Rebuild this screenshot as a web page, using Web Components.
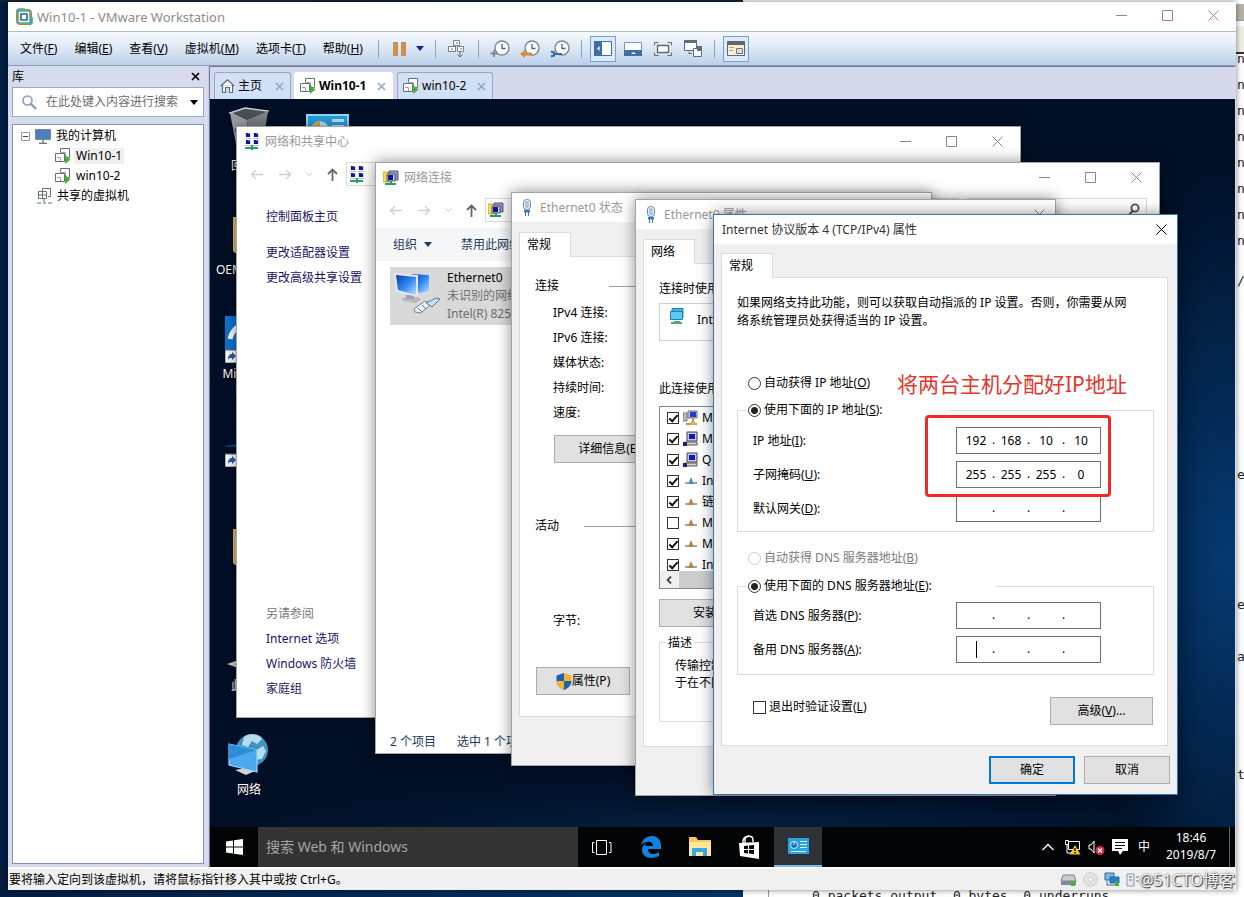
<!DOCTYPE html>
<html lang="zh-CN">
<head>
<meta charset="utf-8">
<title>Win10-1 - VMware Workstation</title>
<style>
html,body{margin:0;min-height:100vh}
body{position:relative;display:flex;overflow:hidden;box-sizing:border-box;padding:2px 8px 8px 8px;
 font:12px/16px "Noto Sans","Noto Sans CJK SC",sans-serif;color:#000;
 background:linear-gradient(#1c2430 0 1px,transparent 2px),linear-gradient(90deg,#021d42,#033463 60%)}
host-terminal{position:absolute;left:743px;right:0;top:0;bottom:0}
vm-workstation{flex:1;position:relative}
</style>
</head>
<body>
<host-terminal></host-terminal>
<vm-workstation></vm-workstation>
<script>
const BASE = `*{box-sizing:border-box}button,input{font:inherit;color:inherit;margin:0}
button{border:0;background:none;padding:0;display:inline-flex;align-items:center;justify-content:center;white-space:nowrap}
a{color:inherit;text-decoration:none}ui-icon{flex:none}`;
function define(name, css, html, setup){
  const t = document.createElement('template');
  t.innerHTML = `<style>${BASE}${css}</style>${html}`;
  customElements.define(name, class extends HTMLElement{
    constructor(){ super(); this.attachShadow({mode:'open'}).append(t.content.cloneNode(true)); }
    connectedCallback(){ if(setup) setup(this, this.shadowRoot); }
  });
}

const clock = `<circle cx="12" cy="8" r="7" fill="#fff" stroke="#7b8794" stroke-width="1.4"/><path d="M12 4v4.5h3.5" fill="none" stroke="#56616e" stroke-width="1.3"/>`;
const vmbox = `<path d="M5.5 4.5v-4h9v9h-2M.5 5.5h9v8h-9z" fill="#fff" stroke="#66707c"/><path d="M5.5 4.500h5v5M5.500 13V9.500H2" stroke="#9aa3ad" fill="none"/>`;
const pc = (x,y)=>`<path d="M${x} ${y}h6v4h-6z" fill="#d9dbe8"/><path d="M${x+1} ${y}h4v4h-4z" fill="#17178c"/><path d="M${x+3} ${y}h2v1h-2z" fill="#5a7ff0"/><path d="M${x} ${y+5}h6v1h-6z" fill="#b9bccb"/>`;
const screen = `<path d="M4 1h10v9H4z" fill="#c9ccd6" stroke="#444"/><path d="M6 3h6v5H6z" fill="#1212c8"/><path d="M2 11h12v3H2z" fill="#d3d3d3" stroke="#555"/><path d="M0 11h4v4H0z" fill="#1a1a80"/>`;
const ICONS = {
 vmware:[18,18,`<rect x="1.5" y="1.5" width="15" height="15" rx="3" fill="#f2b13b" stroke="#d57a1c"/><path d="M3 3h12v12H3z" fill="#fff7d8" stroke="#38a8b8" stroke-width="1.6"/><path d="M6 6h6v6H6z" fill="#fff" stroke="#28659a" stroke-width="1.6"/><path d="M1 3l3-2h6M17 9v6l-3 2" fill="none" stroke="#38a8b8" stroke-width="1.6"/>`],
 min:[11,11,`<path d="M0 5.5h11" stroke="currentColor"/>`],
 max:[11,11,`<path d="M.5.5h10v10H.5z" fill="none" stroke="currentColor"/>`],
 close:[11,11,`<path d="M.5.5l10 10M10.500.5l-10 10" fill="none" stroke="currentColor"/>`],
 smallx:[9,9,`<path d="M1 1l7 7M8 1L1 8" stroke="currentColor" stroke-width="1.7"/>`],
 pause:[13,14,`<path d="M0 0h5v14H0zM8 0h5v14H8z" fill="#d08f4e"/>`],
 caret:[8,5,`<path d="M0 0h8L4 5z" fill="currentColor"/>`],
 keys:[17,18,`<g fill="#fff" stroke="#77828e"><path d="M5.500.5h6v5h-6zM.5 6.500h7v5h-7zM9.500 6.500h6v5h-6z"/></g><path d="M3 9h2M12 9h2M8 3h2M12 12v5M9.500 14.500l2.500 2.500 2.500-2.500" fill="none" stroke="#5d6873"/>`],
 snap:[20,18,clock+`<path d="M4 10v7M.5 13.500h7" stroke="#7b8794" stroke-width="1.800"/>`],
 revert:[20,18,clock+`<path d="M0 14l5-4v2.500h7v3H5V18z" fill="#d98a3c"/>`],
 manage:[20,18,clock+`<path d="M1 11.500l3 1v3l-3 1M4 14h8" stroke="#356aa8" stroke-width="2.200" fill="none"/>`],
 side:[18,15,`<path d="M.5.5h17v14H.5z" fill="#fff" stroke="#3e6ea5"/><path d="M0 0h8v15H0z" fill="#3e6ea5"/><path d="M5.500 5v5L3 7.500z" fill="#fff"/>`],
 thumb:[18,14,`<path d="M.5.5h17v13H.5z" fill="#fff" stroke="#8795a5"/><path d="M0 8h18v6H0z" fill="#3e6ea5"/><path d="M7 12h5l-2.500-2z" fill="#fff"/>`],
 full:[18,14,`<path d="M3.500 3.500h11v7h-11z" fill="#fff" stroke="#626d79" stroke-width="1.400"/><path d="M.5 3.500v-3h4M13.500.5h4v3M.5 10.500v3h4M13.500 13.500h4v-3" fill="none" stroke="#626d79"/>`],
 unity:[18,17,`<path d="M.5.5h12v10H.5z" fill="#fff" stroke="#626d79"/><path d="M0 0h13v3H0z" fill="#626d79"/><path d="M8 13.500H5v-2" fill="none" stroke="#626d79"/><path d="M9.500 8.500h8v8h-8z" fill="#fff" stroke="#626d79"/><path d="M13 6h5v5h-5z" fill="#626d79"/>`],
 console:[18,15,`<path d="M.5.5h17v14H.5z" fill="#f5efe0" stroke="#666"/><path d="M0 0h18v4H0z" fill="#666"/><path d="M2 6.500h5M2 9.500h4" stroke="#c9a45d"/><path d="M9.500 7.500h6v5h-6z" fill="#ddd" stroke="#777"/>`],
 home:[15,14,`<path d="M.8 7L7.500.8 14.200 7M2.500 6v7.500h3v-5h4v5h3V6" fill="#fff" stroke="#5f6973" stroke-width="1.200"/>`],
 vmon:[16,16,vmbox+`<path d="M10 7l5.500 4.500L10 16z" fill="#44b32e"/>`],
 shared:[15,16,`<path d="M5.500 3V.5h8v8H11M1.500 3.500h8v7h-8z" fill="#fff" stroke="#66707c"/><path d="M5.500 3.500v7M1.500 7h8M7 11v3M0 15h4M6 15h3M11 15h4" stroke="#66707c"/>`],
 monitor:[16,15,`<path d="M.5.5h15v10H.5z" fill="#4c7dbd" stroke="#7a8794"/><path d="M8 11v3M4 14.500h8" stroke="#68737f" stroke-width="1.400"/>`],
 lens:[15,15,`<circle cx="5.500" cy="5.500" r="4.500" fill="none" stroke="#8a9ab8" stroke-width="1.600"/><path d="M9 9l5 5" stroke="#8a9ab8" stroke-width="2.400"/>`],
 lens2:[12,14,`<circle cx="7" cy="5" r="3.600" fill="none" stroke="#555" stroke-width="1.800"/><path d="M4.500 8L1 12" stroke="#555" stroke-width="2"/>`],
 minus:[9,9,`<path d="M.5.5h8v8h-8z" fill="#fff" stroke="#999"/><path d="M2 4.500h5" stroke="#444"/>`],
 netcenter:[16,17,pc(1,0)+pc(9,0)+pc(1,7)+pc(9,7)+`<path d="M7 12h2v2h5v2H9v1H7v-1H1v-2h6z" fill="#24a06a"/>`],
 netconn:[16,16,`<path d="M0 2h5l1 1v9H0z" fill="#f4dc5a" stroke="#c7a82f"/><path d="M6 1h9v9H6z" fill="#8d92b8" stroke="#555d8c"/><path d="M4 4h8v7H4z" fill="#cfd2e6" stroke="#555"/><path d="M5 5h5v5H5z" fill="#1212a8"/><path d="M7 11h2v2h4v2H2v-2h5z" fill="#24a06a"/>`],
 plug:[16,17,`<rect x="4.500" y=".5" width="7" height="10" rx="3" fill="#e8f0fa" stroke="#6585b5"/><path d="M7 3h2v5H7z" fill="#fff" stroke="#7895bf"/><path d="M5 11h6v2.500H5z" fill="#3f78b5"/><path d="M6.500 13v4M9.500 13v4" stroke="#3f78b5"/>`],
 back:[13,11,`<path d="M6 1L1.500 5.500 6 10M1.500 5.500H13" fill="none" stroke="#cfcfcf" stroke-width="1.300"/>`],
 fwd:[13,11,`<path d="M7 1l4.500 4.500L7 10M11.500 5.500H0" fill="none" stroke="#cfcfcf" stroke-width="1.300"/>`],
 chev:[7,5,`<path d="M.5.5l3 3 3-3" fill="none" stroke="#cfcfcf"/>`],
 up:[11,13,`<path d="M1 6l4.500-4.500L10 6M5.500 1.500V13" fill="none" stroke="#666" stroke-width="1.800"/>`],
 gt:[5,8,`<path d="M1 .5L4 4 1 7.500" fill="none" stroke="#666" stroke-width="1.300"/>`],
 lt:[6,8,`<path d="M5 .5L1.500 4 5 7.500" fill="none" stroke="#444" stroke-width="1.800"/>`],
 ethernet:[48,48,`<defs><linearGradient id="a" x2="1" y2="1"><stop stop-color="#0a3fae"/><stop offset=".5" stop-color="#2f86f2"/><stop offset="1" stop-color="#b9dcff"/></linearGradient></defs><path d="M17 4h20v20l-12 3z" fill="#d8dce2"/><path d="M18 5l17 1v16l-10 2z" fill="url(#a)"/><path d="M8 29l16-1 3 3-6 3-12-2z" fill="#b5b8bd"/><path d="M12 26h8v4h-8z" fill="#9ca3ab"/><path d="M0 4l24 2v22L2 23z" fill="#e4e7eb"/><path d="M2 6l20 2v18L4 21z" fill="url(#a)"/><path d="M20 40l11-8 6 3-10 9-6-1z" fill="#eaf1f5" stroke="#75858f"/><path d="M32 34l10-5 4 1-8 8zM24 39l4 4M28 36l4 4" fill="#bfe3f1" stroke="#607885"/>`],
 shield:[16,17,`<path d="M8 0l7.500 2.500V8c0 4-3 7-7.500 9z" fill="#f3b52c"/><path d="M8 0L.5 2.500V8c0 4 3 7 7.500 9z" fill="#1d5fb0"/><path d="M8 8h7.500c0 4-3 7-7.500 9z" fill="#1d5fb0"/><path d="M8 8H.5c0 4 3 7 7.500 9z" fill="#f3b52c"/>`],
 adapter:[16,16,`<path d="M3 .5h11v9H3z" fill="#3fb1e3" stroke="#1f7fae"/><path d="M1.500 3.500h12v8h-12z" fill="#5fc8ef" stroke="#1f7fae"/><path d="M5 13h6v1h2v2H2v-2h3z" fill="#4ca874"/>`],
 client:[16,16,`<path d="M0 3h4v8H0z" fill="#b9bdc9" stroke="#777"/><path d="M5 1h9v7H5z" fill="#c9cde0" stroke="#667"/><path d="M7 2h6v5H7z" fill="#1c3fd8"/><path d="M9 8h2v3H9zM3 13h11v2H3z" fill="#c79545"/><path d="M8 11h4v4H8z" fill="#e0b04d"/>`],
 service:[16,16,screen],
 proto:[12,8,`<path d="M0 6h12" stroke="#8a8f98" stroke-width="1.600"/><path d="M6 0l3 7H3z" fill="#b8863b"/>`],
 proto4:[12,8,`<path d="M0 6h12" stroke="#6c9bbd" stroke-width="1.600"/><path d="M6 0l2.500 7h-5z" fill="#4b86b5"/>`],
 bin:[48,48,`<path d="M5 6l15-5 23 3-4 7-18 3z" fill="#4b5056" stroke="#c9cdd2" stroke-width="1.500"/><path d="M5 6l17 7 4 34-14-5z" fill="#9a9ea3"/><path d="M22 13l21-9-6 38-11 5z" fill="#7e8388"/><path d="M9 22l8-4 2 9-7 2z" fill="#2f72c4"/>`],
 panel:[48,48,`<rect x="4" y="8" width="41" height="32" fill="#27a4e2" stroke="#8fdcff" stroke-width="2"/><circle cx="17" cy="23" r="9" fill="#bfeaff"/><path d="M17 14a9 9 0 0 0-8 9h8z" fill="#f0a53b"/><path d="M29 12h12v3H29zM29 18h12v2H29zM24 22h18v4H24z" fill="#bfeaff"/>`],
 folder:[48,48,`<path d="M8 6h30v36H10l-2-2z" fill="#d9bd6c"/><path d="M12 4h28v36H12z" fill="#f5e19b"/>`],
 edge:[48,48,`<path d="M0 1h48v46H0z" fill="#0a76d4"/><path d="M5 24C8 12 18 7 28 8c10 2 14 10 13 20H18c2 8 13 9 21 5" fill="none" stroke="#fff" stroke-width="5"/><path d="M0 35h12v13H0z" fill="#fff" stroke="#667"/><path d="M3 45c0-5 2-6 4-6v-2l4 4-4 4v-2c-2 0-3 0-4 2z" fill="#2b5fa8"/>`],
 jet:[48,48,`<path d="M0 27L40 19v9H0z" fill="#123a70"/><path d="M0 35h12v13H0z" fill="#fff" stroke="#667"/><path d="M3 45c0-5 2-6 4-6v-2l4 4-4 4v-2c-2 0-3 0-4 2z" fill="#2b5fa8"/>`],
 thispc:[48,48,`<path d="M2 37l20-7 22 7-20 8z" fill="#c8ccd2"/><path d="M14 10h30v22H14z" fill="#2f9be6"/>`],
 network:[48,48,`<circle cx="27" cy="19" r="16" fill="#3f94bd"/><path d="M19 6c4-4 14-4 18 2l-5 5-5-3-4 6-6-2zM30 20l8-5 3 5-4 8-7 1z" fill="#b9dceb"/><path d="M10 39l11-2 9 3-9 4z" fill="#d5d0d5"/><path d="M4 13l28 6v22L4 34z" fill="#4ba9ee" stroke="#9bd3fa" stroke-width="1.200"/><path d="M4 13l28 6-28 9z" fill="#2b8ddb"/>`],
 start:[17,16,`<path d="M0 2.500l7-1v6H0zM8 1.300L17 0v7.500H8zM0 8.500h7v6l-7-1zM8 8.500h9V16l-9-1.300z" fill="#fff"/>`],
 task:[20,15,`<path d="M4.500.5h10v14h-10zM2.500 2.500h-2v10h2M17 2.500h2v10h-2" fill="none" stroke="#fff"/>`],
 e:[22,22,`<path d="M1 9C3 2 8 0 12 0c6 0 9 5 9 9v4H8c0 6 7 6 11 3v4c-7 4-17 2-17-6 0-3 2-6 5-7-2 2-2 3-2 3h8c0-4-3-5-6-4-3 0-5 2-6 3z" fill="#1383e0"/>`],
 explorer:[22,20,`<path d="M0 0h7l2 3h13v16H0z" fill="#f3c854"/><path d="M0 5h22v14H0z" fill="#ffe69a"/><path d="M3 11h15v8h-4v-4H7v4H3z" fill="#35a9e0"/>`],
 store:[20,24,`<path d="M6 8V5c0-5 8-5 8 0v2M4 8V6c0-3 3-5 6-5" fill="none" stroke="#fff" stroke-width="1.400"/><path d="M0 8l20-1v17L1 21z" fill="#fff"/><path d="M5 11l4-.5V14H5zM10 10.400l5-.4v4h-5zM5 15h4v3.500L5 18zM10 15h5v4l-5-.5z" fill="#000"/>`],
 cpl:[21,16,`<path d="M0 0h21v16H0z" fill="#2ba5e0"/><circle cx="6" cy="7" r="3.500" fill="#1d6fb0" stroke="#d8f2ff"/><path d="M6 7V4M12 3.500h7M12 6.500h7M12 9.500h7M3 13.500h15" stroke="#d8f2ff"/>`],
 tup:[12,8,`<path d="M.5 7L6 1.500 11.500 7" fill="none" stroke="#fff" stroke-width="1.300"/>`],
 tnet:[17,16,`<path d="M4.500 2.500h11v8h-11zM1.500 1.500h3v4h-3zM3 6v8h7" fill="#000" stroke="#fff"/><path d="M11 6l5.500 9.500h-11z" fill="#f5c32c"/><path d="M11 9v3M11 13v1.500" stroke="#000" stroke-width="1.300"/>`],
 tvol:[17,17,`<path d="M1 6h2l3-4v12l-3-4H1z" fill="none" stroke="#fff"/><circle cx="12" cy="11.500" r="4.500" fill="#d9293c"/><path d="M10 9.500l4 4M14 9.500l-4 4" stroke="#fff" stroke-width="1.200"/>`],
 tmsg:[16,16,`<path d="M0 0h16v12h-5l-3 4-2-4H0z" fill="#fff"/><path d="M3 3.500h10M3 6.500h10M3 9.500h7" stroke="#000"/>`],
 disk:[17,14,`<path d="M3 2h11l2 6H1z" fill="#c5ccd3" stroke="#7c8790"/><path d="M1 8h15v4H1z" fill="#7f8a94"/><path d="M11 9h4v4h-4z" fill="#43b72c"/>`],
 cd:[15,15,`<circle cx="7.500" cy="7.500" r="7" fill="#e3e3e3" stroke="#cfcfcf"/><circle cx="7.500" cy="7.500" r="2" fill="#fff" stroke="#ccc"/>`],
 nic:[16,15,`<path d="M1 1h9v7H1z" fill="#7fb6e4" stroke="#2c6aa3"/><path d="M6 5h9v6H6z" fill="#2f7fc4" stroke="#2c6aa3"/><path d="M3 9v4h6M10 12v2" fill="none" stroke="#2c6aa3"/><path d="M11 10h4v4h-4z" fill="#43b72c"/>`],
 usb:[14,14,`<path d="M1 1h7v12H1z" fill="#e6ebf0" stroke="#8d9aa6"/><path d="M3 4h3M3 7h3M10 4h3M10 8h3" stroke="#6e7b87"/>`]
};
customElements.define('ui-icon', class extends HTMLElement{
  constructor(){ super(); this.attachShadow({mode:'open'}); }
  connectedCallback(){
    const [w,h,m] = ICONS[this.getAttribute('name')];
    this.shadowRoot.innerHTML = `<style>:host{display:inline-flex}svg{display:block}</style><svg width="${w}" height="${h}" viewBox="0 0 ${w} ${h}" aria-hidden="true">${m}</svg>`;
  }
});

define('host-terminal', `:host{display:flex;flex-direction:column;background:linear-gradient(#8c8c8c 0 2px,#fff 2px);font:13px/26px "DejaVu Sans Mono","Liberation Mono",monospace;color:#222}
.bar{height:46px;flex:none;background:linear-gradient(#fff 0 4px,#b9b3a8 4px 20px,#8aa 20px 21px,#fff 21px 26px,#efefe6 26px)}
.right{display:flex;flex-direction:column;align-items:flex-end;background:linear-gradient(#efefe6 0 6px,#333 6px 8px,transparent 8px)}
.right i{font-style:normal;width:7px;height:26px}
.g1{margin-top:14px}.g2{margin-top:168px}.g3{margin-top:104px}.g4{margin-top:26px}.g5{margin-top:92px}
.last{height:12px;margin:auto 0 -4px 25px;padding-left:43px;line-height:12px;border-left:1px solid #999;white-space:pre}`,
`<div class="bar"></div><div class="right"><i>n</i><i>n</i><i>n</i><i>n</i><i>n</i><i>n</i><i>n</i><i>n</i><i class="g1">/</i><i class="g2">e</i><i class="g3">e</i><i class="g4">a</i><i class="g5">t</i></div><div class="last">0 packets output, 0 bytes, 0 underruns</div>`);

define('vm-menubar', `:host{display:flex;align-items:center;height:35px;padding:0 4px;background:linear-gradient(#f6fafe,#dfeaf6 45%,#bcd0e9);border-top:1px solid #a9bdd8;border-bottom:1px solid #8d9ab5}
.m{padding:0 8px;height:24px;margin-right:1px}hr{width:1px;height:18px;border:0;margin:0 6px;background:#8ba3c4}.t{min-width:26px;height:26px;margin:0 2px}
.on{border:1px solid #7aa0d6;background:#dcebfb}.pw{min-width:26px;margin-right:0}.car{color:#202080;min-width:14px;margin-left:0}`,
`<button class="m">文件(<u>F</u>)</button><button class="m">编辑(<u>E</u>)</button><button class="m">查看(<u>V</u>)</button><button class="m">虚拟机(<u>M</u>)</button><button class="m">选项卡(<u>T</u>)</button><button class="m">帮助(<u>H</u>)</button>
<hr><button class="t pw" aria-label="挂起"><ui-icon name="pause"></ui-icon></button><button class="t car" aria-label="电源"><ui-icon name="caret"></ui-icon></button>
<hr><button class="t" aria-label="发送 Ctrl+Alt+Del"><ui-icon name="keys"></ui-icon></button>
<hr><button class="t" aria-label="快照"><ui-icon name="snap"></ui-icon></button><button class="t" aria-label="恢复"><ui-icon name="revert"></ui-icon></button><button class="t" aria-label="管理"><ui-icon name="manage"></ui-icon></button>
<hr><button class="t on" aria-label="库"><ui-icon name="side"></ui-icon></button><button class="t" aria-label="缩略图"><ui-icon name="thumb"></ui-icon></button><button class="t" aria-label="全屏"><ui-icon name="full"></ui-icon></button><button class="t" aria-label="Unity"><ui-icon name="unity"></ui-icon></button>
<hr><button class="t on" aria-label="控制台"><ui-icon name="console"></ui-icon></button>`);

define('vm-library', `:host{display:flex;flex-direction:column;width:201px;padding:0 4px 3px 4px;background:#d6dbee;border-right:1px solid #c4cbe2}
header{display:flex;justify-content:space-between;align-items:center;height:21px;padding-right:4px}
.s{display:flex;align-items:center;height:30px;background:#fff;border:1px solid #9aa7c4;padding:0 5px 0 9px;margin-bottom:7px}
.s input{flex:1;min-width:0;border:0;outline:0;background:none;padding:0 0 0 9px}.s input::placeholder{color:#6d6d6d;opacity:1}
ul{list-style:none;margin:0;padding:0}.tree{flex:1;background:#fff;border:1px solid #7f93b8;padding:1px 8px}
.r{display:flex;align-items:center;gap:5px;height:20px}.k{padding-left:34px}.k span{padding:0 2px;margin-left:-2px}.on{background:#efefef}.sh{padding-left:16px}`,
`<header><span>库</span><button aria-label="关闭"><ui-icon name="smallx"></ui-icon></button></header>
<div class="s"><ui-icon name="lens"></ui-icon><input aria-label="搜索" placeholder="在此处键入内容进行搜索"><ui-icon name="caret"></ui-icon></div>
<ul class="tree"><li><div class="r"><ui-icon name="minus"></ui-icon><ui-icon name="monitor"></ui-icon><span>我的计算机</span></div>
<ul><li class="r k"><ui-icon name="vmon"></ui-icon><span class="on">Win10-1</span></li><li class="r k"><ui-icon name="vmon"></ui-icon><span>win10-2</span></li></ul></li>
<li class="r sh"><ui-icon name="shared"></ui-icon><span>共享的虚拟机</span></li></ul>`);

define('vm-tab', `:host{display:flex;align-items:center;height:27px;padding:0 6px 0 5px;border:1px solid #93a8cc;border-bottom:0;border-radius:3px 3px 0 0;background:linear-gradient(#d3e0f4,#cfe0f7)}
:host([active]){background:#fff;border-color:#fff;font-weight:bold}span{flex:1;padding-left:3px}button{color:#93a9c4}`,
`<slot name="icon"></slot><span><slot></slot></span><button aria-label="关闭"><ui-icon name="smallx"></ui-icon></button>`);

define('guest-window', `:host{display:flex;flex-direction:column;position:absolute;background:#fff;border:1px solid #a3a3a3;box-shadow:0 0 14px rgba(0,0,0,.45);overflow:hidden;color:#000}
:host([dialog]){background:#f0f0f0}:host([active]){border-color:#2f78b8}
header{display:flex;align-items:center;height:29px;padding-left:7px;gap:5px;background:#fff;color:#999;white-space:nowrap}
:host([active]) header{color:#333;padding-left:3px}h2{flex:1;font:inherit;margin:0}.c{display:flex}button{width:46px;height:29px;color:#888}:host([dialog]) button{width:31px}:host([active]) button{color:#000}`,
`<header><slot name="icon"></slot><h2><slot name="title"></slot></h2><span class="c"></span></header><slot></slot>`,
(h,r)=>{ r.querySelector('.c').innerHTML=(h.hasAttribute('dialog')?[['close','关闭']]:[['min','最小化'],['max','最大化'],['close','关闭']]).map(([n,l])=>`<button aria-label="${l}"><ui-icon name="${n}"></ui-icon></button>`).join(''); });

define('address-row', `:host{display:flex;align-items:center;height:36px;padding:0 12px 0 5px;flex:none}
.n{width:28px}.f{width:30px}.c{width:18px}.a{flex:1;display:flex;align-items:center;gap:9px;height:24px;border:1px solid #d9d9d9;padding:0 2px}
.s{display:flex;align-items:center;justify-content:flex-end;width:180px;height:24px;margin-left:8px;padding-right:6px;border:1px solid #d9d9d9}`,
`<button class="n" aria-label="后退"><ui-icon name="back"></ui-icon></button><button class="f" aria-label="前进"><ui-icon name="fwd"></ui-icon></button><button class="c" aria-label="最近"><ui-icon name="chev"></ui-icon></button><button class="n" aria-label="上移"><ui-icon name="up"></ui-icon></button><div class="a"><slot></slot><ui-icon name="gt"></ui-icon></div><div class="s"><ui-icon name="lens2"></ui-icon></div>`);

define('tab-page', `:host{display:flex;flex-direction:column;flex:1;padding:9px 9px 0 6px}
.tab{align-self:flex-start;width:52px;height:25px;padding:0 7px;justify-content:flex-start;background:#fff;border:1px solid #dcdcdc;border-bottom:0;margin-bottom:-1px;position:relative}
.p{flex:1;background:#fff;border:1px solid #dcdcdc}`,
`<button class="tab" role="tab"><slot name="tab"></slot></button><div class="p" role="tabpanel"><slot></slot></div>`);

define('sharing-center', `:host{display:flex;flex-direction:column;flex:1;padding:12px 29px 16px;color:#1b1464}a,span{height:25px;line-height:25px}
nav{display:flex;flex-direction:column;align-items:flex-start}.home{margin-bottom:11px}.see{margin-top:auto}.see span{color:#777}`,
`<nav><a href="#" class="home">控制面板主页</a><a href="#">更改适配器设置</a><a href="#">更改高级共享设置</a></nav>
<nav class="see"><span>另请参阅</span><a href="#">Internet 选项</a><a href="#">Windows 防火墙</a><a href="#">家庭组</a></nav>`);

define('connection-list', `:host{display:flex;flex-direction:column;flex:1;white-space:nowrap;overflow:hidden}
.bar{display:flex;height:33px;flex:none;background:#f5f6f7;padding:0 17px;gap:29px;color:#1e395b}.bar button{gap:7px}
.item{display:flex;gap:5px;width:280px;height:58px;margin:6px 14px;padding:2px 4px;background:#d9d9d9;line-height:18px;color:#6d6d6d}.item b{font-weight:400;color:#000}.item div{display:flex;flex-direction:column}
footer{display:flex;gap:21px;margin-top:auto;padding:0 14px;height:22px;line-height:22px;color:#1e395b}`,
`<div class="bar"><button>组织<ui-icon name="caret"></ui-icon></button><button>禁用此网络</button></div>
<div class="item"><ui-icon name="ethernet"></ui-icon><div><b>Ethernet0</b><span>未识别的网络</span><span>Intel(R) 825</span></div></div>
<footer><span>2 个项目</span><span>选中 1 个项</span></footer>`);

const BTN = `.btn{height:28px;border:1px solid #adadad;background:#e1e1e1}`;
define('status-form', `:host{display:flex;flex-direction:column;align-items:flex-start;height:100%;padding:19px 15px 0}
h3{display:flex;align-items:center;width:100%;font:inherit;margin:0;height:20px}h3:after{content:"";flex:1;height:1px;background:#a0a0a0;margin-left:50px}
h3.a:after{margin-left:25px}dl{margin:4px 0 10px 18px;line-height:25px}dt{height:25px}.d{width:120px;margin-left:19px}h3.a{margin-top:53px}
.x{margin:77px 0 0 18px}.p{width:94px;margin:38px 0 0 1px}${BTN}`,
`<h3>连接</h3><dl><dt>IPv4 连接:</dt><dt>IPv6 连接:</dt><dt>媒体状态:</dt><dt>持续时间:</dt><dt>速度:</dt></dl><button class="btn d">详细信息(E)...</button>
<h3 class="a">活动</h3><div class="x">字节:</div><button class="btn p"><ui-icon name="shield"></ui-icon>属性(P)</button>`);

const CHECK = `input[type=checkbox]{appearance:none;flex:none;width:13px;height:13px;border:1px solid #333;background:#fff;display:grid;place-items:center}
input[type=checkbox]:checked:after{content:"";width:3px;height:7px;border:solid #111;border-width:0 2px 2px 0;transform:rotate(42deg);margin-top:-2px}`;
define('adapter-form', `:host{display:flex;flex-direction:column;padding:17px 15px 0;height:100%;white-space:nowrap}
.dev{display:flex;gap:12px;height:38px;margin:6px 0 40px;padding:4px 9px 0;align-items:flex-start;border:1px solid #cfcfcf}.dev span{margin-top:4px}
.list{height:183px;margin:9px 0 10px;border:1px solid #828790;overflow:hidden;display:flex;flex-direction:column}ul{list-style:none;margin:0;padding:1px 0 0 7px;height:164px;overflow:hidden}
label{display:flex;align-items:center;height:20px;margin-bottom:1px;gap:1px}label input[type=checkbox]{width:12px;height:12px}label i{width:21px;display:grid;place-items:center}
.sb{display:flex;height:17px;background:#f0f0f0;align-items:center;padding-left:6px;gap:7px}.sb b{width:300px;height:17px;background:#cdcdcd}
.btn{width:118px;flex:none}fieldset{margin:7px 0 0;border:1px solid #dcdcdc;padding:6px 15px;height:88px;line-height:17px}legend{padding:0 2px;margin-left:-9px}${BTN}${CHECK}`,
`<div>连接时使用</div><div class="dev"><ui-icon name="adapter"></ui-icon><span>Int</span></div><div>此连接使用</div>
<div class="list"><ul>
<li><label><input type="checkbox" checked><i><ui-icon name="client"></ui-icon></i>M</label></li>
<li><label><input type="checkbox" checked><i><ui-icon name="service"></ui-icon></i>M</label></li>
<li><label><input type="checkbox" checked><i><ui-icon name="service"></ui-icon></i>Q</label></li>
<li><label><input type="checkbox" checked><i><ui-icon name="proto4"></ui-icon></i>In</label></li>
<li><label><input type="checkbox" checked><i><ui-icon name="proto"></ui-icon></i>链</label></li>
<li><label><input type="checkbox"><i><ui-icon name="proto"></ui-icon></i>M</label></li>
<li><label><input type="checkbox" checked><i><ui-icon name="proto"></ui-icon></i>M</label></li>
<li><label><input type="checkbox" checked><i><ui-icon name="proto"></ui-icon></i>In</label></li></ul>
<div class="sb"><ui-icon name="lt"></ui-icon><b></b></div></div>
<button class="btn">安装(N)...</button><fieldset><legend>描述</legend>传输控制<br>于在不同</fieldset>`);

define('ip-field', `:host{display:grid;grid-template-columns:203px 145px;align-items:center;height:26px}
.f{display:flex;height:27px;padding-left:4px;border:1px solid #6f6f6f;background:#fff;line-height:23px}
input{width:30px;padding:0;border:0;outline:0;background:none;text-align:center}i{font-style:normal;width:5px;text-align:center}
:host([caret]) input:first-child{background:linear-gradient(#000,#000) 15px 4px/1px 17px no-repeat}`,
`<label for="o0"><slot></slot></label><div class="f"></div>`,
(h,r)=>{ const v=(h.getAttribute('value')||'...').split('.'); r.querySelector('.f').innerHTML=v.map((s,i)=>`<input id="o${i}" value="${s}" aria-label="${i+1}" maxlength="3">`).join('<i>.</i>'); });

define('ipv4-form', `:host{display:block;padding:16px 13px 16px 15px}
p{margin:0 0 43px;width:396px;line-height:18px}.r{display:flex;align-items:center;gap:3px;height:20px}.o{margin-left:11px}
input[type=radio]{appearance:none;width:13px;height:13px;border:1px solid #333;border-radius:50%;background:#fff}
input[type=radio]:checked{background:radial-gradient(circle,#222 0 3px,#fff 4px)}input[type=radio]:disabled{border-color:#ccc}
fieldset{min-width:0;margin:7px 0 16px;border:1px solid #dcdcdc;padding:7px 0 10px 15px}legend{padding:0 0 0 2px;margin-left:-7px;width:204px}
.dns{margin:8px 0 22px;padding:6px 0 12px 15px}.dns legend{width:250px}ip-field+ip-field{margin-top:8px}.off{color:#7b7b7b}
.end{display:flex;justify-content:space-between;align-items:flex-start;padding:0 1px 0 16px}.end .btn{width:103px}${BTN}${CHECK}`,
`<p>如果网络支持此功能，则可以获取自动指派的 IP 设置。否则，你需要从网络系统管理员处获得适当的 IP 设置。</p>
<label class="r o"><input type="radio" name="ip"><span>自动获得 IP 地址(<u>O</u>)</span></label>
<fieldset><legend><label class="r"><input type="radio" name="ip" checked><span>使用下面的 IP 地址(<u>S</u>):</span></label></legend>
<ip-field value="192.168.10.10">IP 地址(<u>I</u>):</ip-field><ip-field value="255.255.255.0">子网掩码(<u>U</u>):</ip-field><ip-field>默认网关(<u>D</u>):</ip-field></fieldset>
<label class="r o off"><input type="radio" name="dns" disabled><span>自动获得 DNS 服务器地址(<u>B</u>)</span></label>
<fieldset class="dns"><legend><label class="r"><input type="radio" name="dns" checked><span>使用下面的 DNS 服务器地址(<u>E</u>):</span></label></legend>
<ip-field>首选 DNS 服务器(<u>P</u>):</ip-field><ip-field caret>备用 DNS 服务器(<u>A</u>):</ip-field></fieldset>
<div class="end"><label class="r"><input type="checkbox"><span>退出时验证设置(<u>L</u>)</span></label><button class="btn"><span>高级(<u>V</u>)...</span></button></div>`);

define('desktop-shortcut', `:host{display:flex;flex-direction:column;align-items:center;height:104px;padding-top:8px;gap:2px;color:#fff;text-align:center;line-height:17px;text-shadow:0 1px 2px #000}`,
`<slot name="i"></slot><span><slot></slot></span>`);

define('guest-taskbar', `:host{display:flex;height:40px;background:#030406;color:#fff}.st{width:48px}
input{width:320px;border:0;outline:0;background:#333;padding:0 8px;font-size:14px;line-height:20px}input::placeholder{color:#a5a5a5;opacity:1}
.t{width:48px;margin-right:1px}.on{background:#2e3136;border-bottom:2px solid #76b9ed}
.tray{margin-left:auto;display:flex;align-items:center}.tray button{width:24px;height:40px}.clock{width:70px;text-align:center;line-height:17px;padding-bottom:2px}.end{width:6px;height:40px;margin-left:3px;border-left:1px solid #666}`,
`<button class="st" aria-label="开始"><ui-icon name="start"></ui-icon></button><input aria-label="搜索" placeholder="搜索 Web 和 Windows"><button class="t" aria-label="任务视图"><ui-icon name="task"></ui-icon></button><button class="t" aria-label="Edge"><ui-icon name="e"></ui-icon></button><button class="t" aria-label="文件资源管理器"><ui-icon name="explorer"></ui-icon></button><button class="t" aria-label="应用商店"><ui-icon name="store"></ui-icon></button><button class="t on" aria-label="控制面板"><ui-icon name="cpl"></ui-icon></button>
<div class="tray"><button aria-label="更多"><ui-icon name="tup"></ui-icon></button><button aria-label="网络"><ui-icon name="tnet"></ui-icon></button><button aria-label="音量"><ui-icon name="tvol"></ui-icon></button><button aria-label="通知"><ui-icon name="tmsg"></ui-icon></button><button>中</button><div class="clock">18:46<br>2019/8/7</div><span class="end"></span></div>`);

define('guest-desktop', `:host{display:flex;flex-direction:column;position:relative;flex:1;overflow:hidden;
background:radial-gradient(ellipse 130px 400px at 99% 60%,#043a72,rgba(4,50,100,0)),radial-gradient(ellipse 500px 60px at 50% 96%,#04203f,rgba(4,32,63,0)),#010f26}
.icons{flex:1;display:grid;grid-template-columns:78px 78px;grid-auto-rows:104px;align-content:start}
.icons>*{grid-column:1}.icons>.c2{grid-column:2;grid-row:1}
.w1{left:26px;top:27px;width:785px;height:592px}.w2{left:165px;top:63px;width:785px;height:592px}.w3{left:301px;top:93px;width:421px;height:574px}
.w4{left:425px;top:100px;width:421px;height:597px}.w5{left:503px;top:115px;width:465px;height:581px}.w3 tab-page,.w4 tab-page{margin-bottom:48px;padding:10px 9px 0 7px}
.w5 tab-page{padding-left:7px}
.act{display:flex;justify-content:flex-end;gap:9px;padding:10px 7px}.act button{width:86px}${BTN}.btn.ok{border:2px solid #0078d7}
.note{position:absolute;left:183px;top:154px;font-size:21px;line-height:30px;color:#e5352b;white-space:nowrap}.mark{position:absolute;left:211px;top:200px;width:186px;height:82px;border:3px solid #ee2a22;border-radius:4px}`,
`<div class="icons"><desktop-shortcut><ui-icon slot="i" name="bin"></ui-icon>回收站</desktop-shortcut><desktop-shortcut class="c2"><ui-icon slot="i" name="panel"></ui-icon></desktop-shortcut>
<desktop-shortcut><ui-icon slot="i" name="folder"></ui-icon>OEM 配置文</desktop-shortcut><desktop-shortcut><ui-icon slot="i" name="edge"></ui-icon>Microsoft<br>Edge</desktop-shortcut><desktop-shortcut><ui-icon slot="i" name="jet"></ui-icon></desktop-shortcut><desktop-shortcut><ui-icon slot="i" name="folder"></ui-icon></desktop-shortcut><desktop-shortcut><ui-icon slot="i" name="thispc"></ui-icon>此电脑</desktop-shortcut><desktop-shortcut><ui-icon slot="i" name="network"></ui-icon>网络</desktop-shortcut></div>
<guest-taskbar></guest-taskbar>
<guest-window class="w1"><ui-icon slot="icon" name="netcenter"></ui-icon><span slot="title">网络和共享中心</span><address-row><ui-icon name="netcenter"></ui-icon></address-row><sharing-center></sharing-center></guest-window>
<guest-window class="w2"><ui-icon slot="icon" name="netconn"></ui-icon><span slot="title">网络连接</span><address-row><ui-icon name="netconn"></ui-icon></address-row><connection-list></connection-list></guest-window>
<guest-window class="w3" dialog><ui-icon slot="icon" name="plug"></ui-icon><span slot="title">Ethernet0 状态</span><tab-page><span slot="tab">常规</span><status-form></status-form></tab-page></guest-window>
<guest-window class="w4" dialog><ui-icon slot="icon" name="plug"></ui-icon><span slot="title">Ethernet0 属性</span><tab-page><span slot="tab">网络</span><adapter-form></adapter-form></tab-page></guest-window>
<guest-window class="w5" dialog active><span slot="icon"></span><span slot="title">Internet 协议版本 4 (TCP/IPv4) 属性</span><tab-page><span slot="tab">常规</span><ipv4-form></ipv4-form></tab-page><div class="act"><button class="btn ok">确定</button><button class="btn">取消</button></div><span class="note">将两台主机分配好IP地址</span><div class="mark"></div></guest-window>`);

define('vm-workstation', `:host{display:flex;flex-direction:column;background:#d6dbee;box-shadow:0 0 6px rgba(0,0,0,.5)}
header{display:flex;align-items:center;height:29px;background:#fff;color:#8c8c8c;padding-left:7px}h1{flex:1;font:inherit;font-size:13px;margin:0 0 0 4px}header button{width:46px;height:27px;align-self:flex-start}
main{flex:1;display:flex}.con{flex:1;display:flex;flex-direction:column;min-width:0;border:solid #6f7a94;border-width:1px 0 0 1px;margin-right:1px}
.tabs{display:flex;height:32px;padding:5px 4px 0;background:#d4d9ec}.t1{width:77px}.t2{width:99px;margin:0 4px 0 3px}.t3{width:96px}
footer{display:flex;align-items:center;height:23px;background:#f0f0f0;border-top:2px solid #fff;padding:0 1px}footer span{flex:1}footer ui-icon{margin-right:6px}
.wm{position:absolute;right:1px;bottom:0;font-size:16px;line-height:20px;color:#f4f4f4;text-shadow:1px 1px 1px #333,0 0 2px #555}.pad{width:89px}`,
`<header><ui-icon name="vmware"></ui-icon><h1>Win10-1 - VMware Workstation</h1><button aria-label="最小化"><ui-icon name="min"></ui-icon></button><button aria-label="最大化"><ui-icon name="max"></ui-icon></button><button aria-label="关闭"><ui-icon name="close"></ui-icon></button></header>
<vm-menubar></vm-menubar><main><vm-library></vm-library><div class="con"><div class="tabs"><vm-tab class="t1"><ui-icon slot="icon" name="home"></ui-icon>主页</vm-tab><vm-tab class="t2" active><ui-icon slot="icon" name="vmon"></ui-icon>Win10-1</vm-tab><vm-tab class="t3"><ui-icon slot="icon" name="vmon"></ui-icon>win10-2</vm-tab></div><guest-desktop></guest-desktop></div></main>
<footer><span>要将输入定向到该虚拟机，请将鼠标指针移入其中或按 Ctrl+G。</span><ui-icon name="disk"></ui-icon><ui-icon name="cd"></ui-icon><ui-icon name="nic"></ui-icon><ui-icon name="usb"></ui-icon><i class="pad"></i></footer><div class="wm">@51CTO博客</div>`);
</script>
</body>
</html>
